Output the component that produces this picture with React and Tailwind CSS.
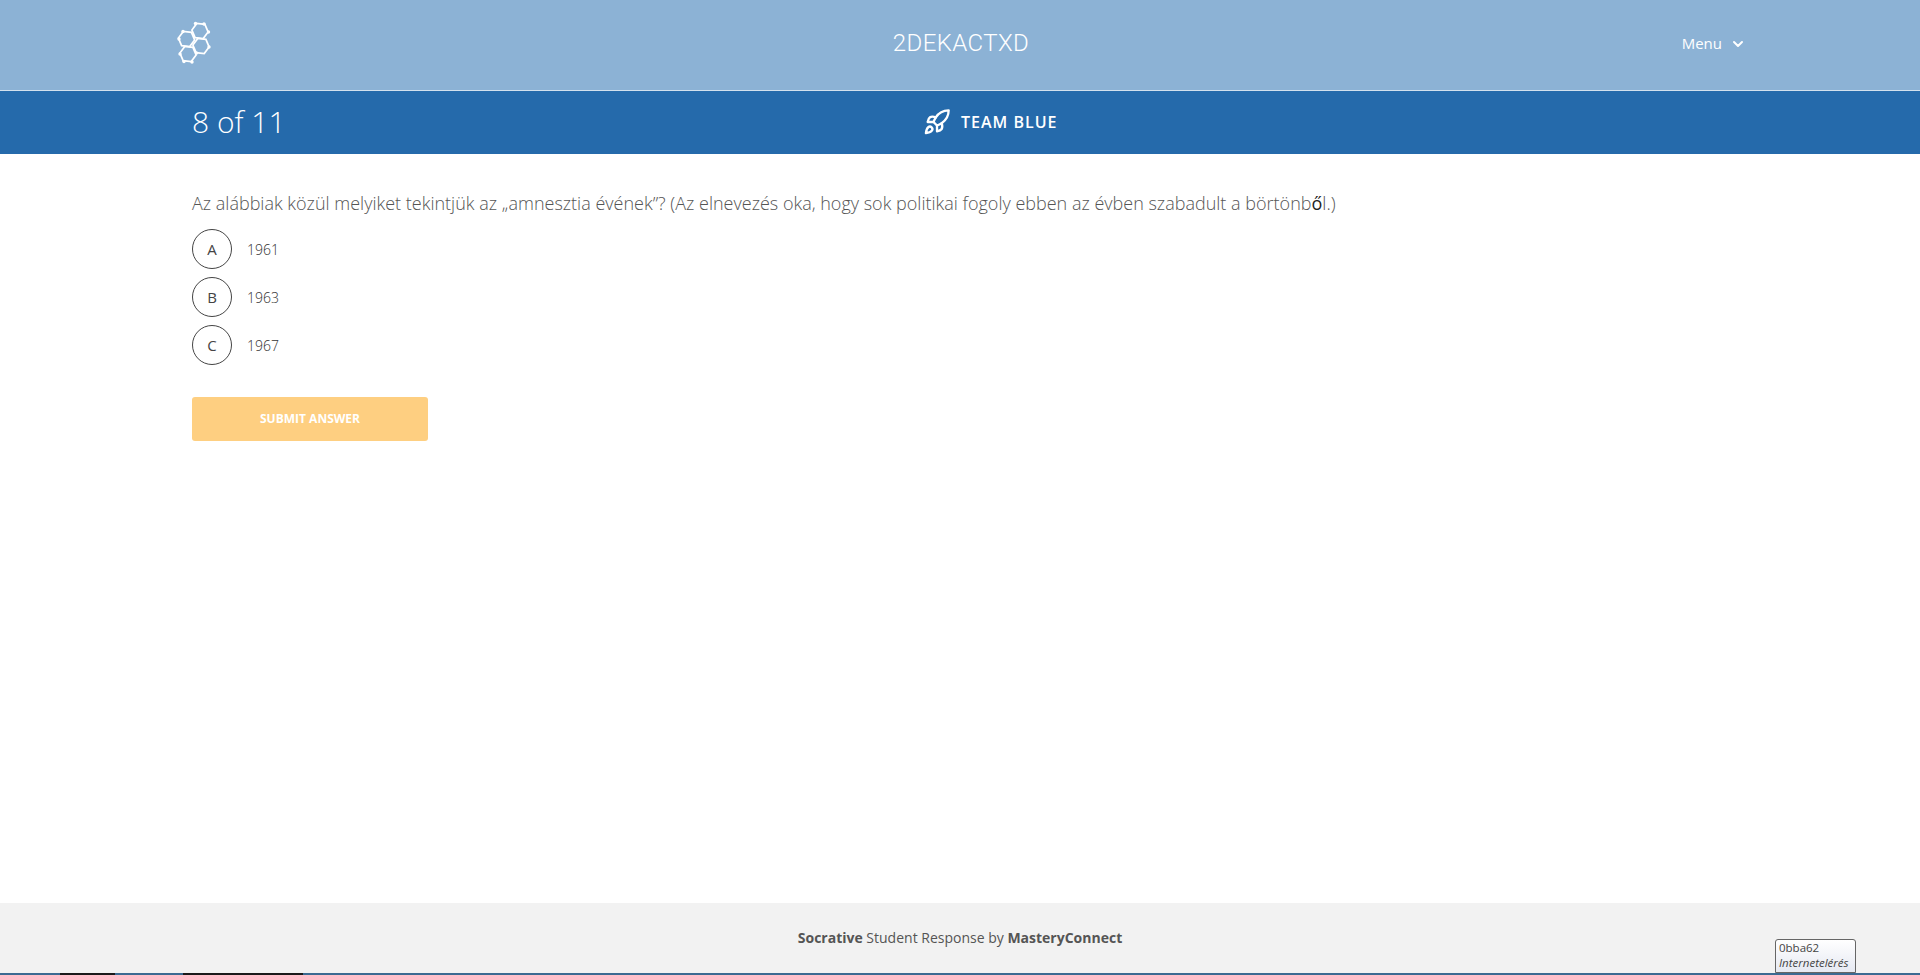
import React from "react";
import { Rocket, ChevronDown } from "lucide-react";

const hex = (cx, cy, r = 8.2) => {
  const pts = [];
  for (let i = 0; i < 6; i++) {
    const a = (Math.PI / 3) * i + 0.12;
    pts.push(`${(cx + r * Math.cos(a)).toFixed(1)},${(cy + r * Math.sin(a)).toFixed(1)}`);
  }
  return pts.join(" ");
};

const centers = [[22, 9], [8.5, 17], [23, 24], [10, 32]];

const Logo = () => (
  <svg width="33" height="41" viewBox="0 0 33 41" fill="none" stroke="#fff" strokeWidth="1.7" className="block overflow-visible">
    {centers.map(([x, y], i) => <polygon key={i} points={hex(x, y)} />)}
    <g fill="#fff" stroke="none">
      {[[30.5, 10], [31, 25], [17.5, 1.5], [26, 2], [1, 17], [5, 9.5], [2, 32], [6, 39.5], [14, 40], [18.5, 31]].map(([x, y], i) => (
        <circle key={i} cx={x} cy={y} r="1.7" />
      ))}
    </g>
  </svg>
);

const Option = ({ letter, text }) => (
  <div className="flex items-center h-[48px]">
    <div className="w-[40px] h-[40px] rounded-full border border-[#444] flex items-center justify-center text-[15px] text-[#444]">{letter}</div>
    <div className="ml-[15px] text-[14px] text-[#333] font-light">{text}</div>
  </div>
);

export default function App() {
  return (
    <div className="relative h-[975px] flex flex-col bg-white font-['Open_Sans',sans-serif] overflow-hidden">
      <header className="h-[91px] shrink-0 bg-[#8cb2d5] border-b border-[#d3e1ee] px-[176px] flex items-center justify-between">
        <div className="w-[200px] -mt-[5px] pl-[2px]"><Logo /></div>
        <div className="font-['Roboto',sans-serif] font-light text-[24px] tracking-[0.4px] text-white -mt-[4px]">2DEKACTXD</div>
        <div className="w-[200px] flex justify-end items-center text-[15px] text-white -mt-[3px] -mr-[2px]">
          <span>Menu</span>
          <ChevronDown size={16} strokeWidth={3} className="ml-[8px]" />
        </div>
      </header>
      <div className="h-[63px] shrink-0 bg-[#256aab] px-[192px] relative flex items-center text-white">
        <div className="text-[30px] font-light -mt-[2px]">8 of 11</div>
        <div className="absolute left-[923px] top-[17px] flex items-center">
          <Rocket size={28} strokeWidth={2} />
          <span className="ml-[10px] text-[16px] font-semibold tracking-[1px]">TEAM BLUE</span>
        </div>
      </div>
      <main className="flex-1 px-[192px] pt-[36px]">
        <div className="text-[18px] leading-[26px] font-light text-[#555]">Az alábbiak közül melyiket tekintjük az „amnesztia évének”? (Az elnevezés oka, hogy sok politikai fogoly ebben az évben szabadult a börtönb<span className="font-normal text-[#222]">ő</span>l.)</div>
        <div className="mt-[9px]">
          <Option letter="A" text="1961" />
          <Option letter="B" text="1963" />
          <Option letter="C" text="1967" />
        </div>
        <button className="mt-[28px] w-[236px] h-[44px] rounded-[3px] bg-[#fecf81] text-white text-[12px] font-bold block">SUBMIT ANSWER</button>
      </main>
      <footer className="h-[70px] shrink-0 bg-[#f2f2f2] flex items-center justify-center text-[14px] text-[#555] pb-[2px]">
        <span><b className="font-bold">Socrative</b> Student Response by <b className="font-bold">MasteryConnect</b></span>
      </footer>
      <div className="h-[2px] shrink-0 bg-[#3b6a92] flex">
        <div className="ml-[60px] w-[55px] bg-[#1a1a1a]" />
        <div className="ml-[68px] w-[120px] bg-[#1a1a1a]" />
      </div>
      <div className="absolute left-[1775px] top-[939px] w-[81px] h-[34px] bg-gradient-to-b from-white to-[#e6e9f2] border border-[#666] rounded-t-[3px] px-[3px] text-[11.5px] leading-[15px] text-[#444]">
        <div>0bba62</div>
        <div className="italic">Internetelérés</div>
      </div>
    </div>
  );
}
